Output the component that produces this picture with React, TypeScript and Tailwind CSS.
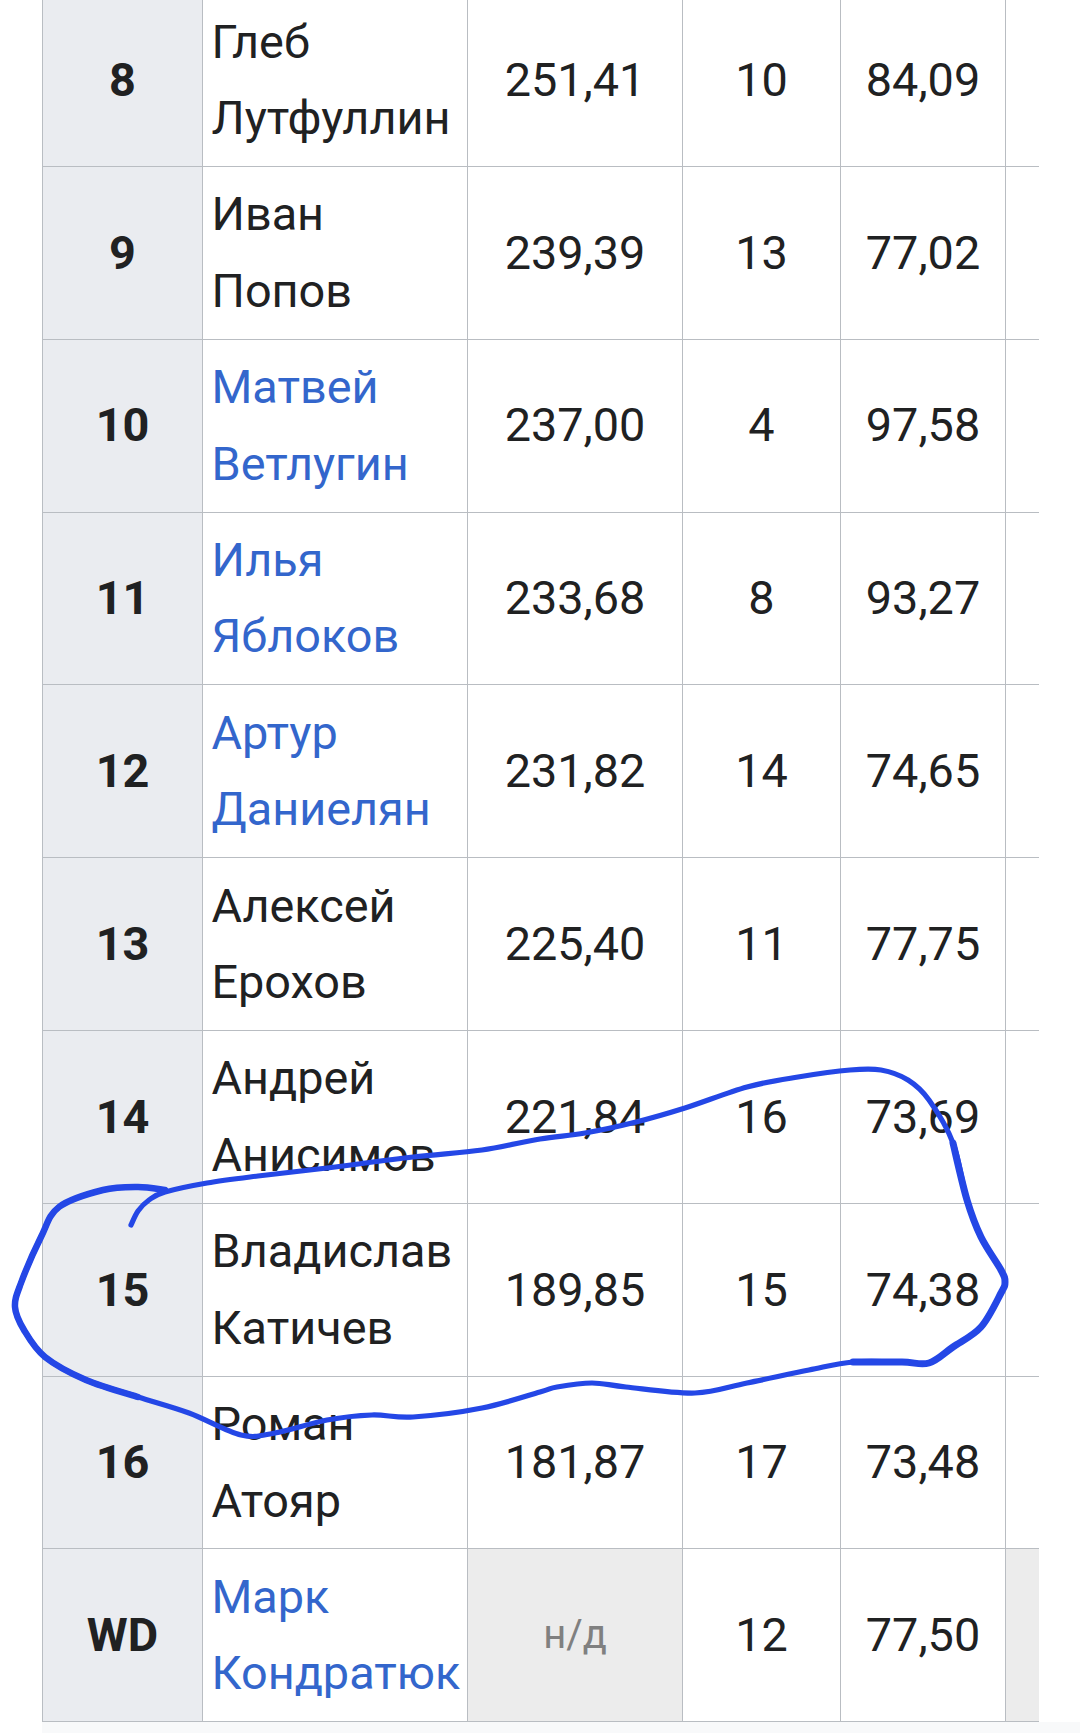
import React from 'react';

type Row = {
  rank: string;
  first: string;
  last: string;
  link?: boolean;
  total?: string;
  place: string;
  score: string;
};

const ROWS: Row[] = [
  { rank: '8', first: 'Глеб', last: 'Лутфуллин', total: '251,41', place: '10', score: '84,09' },
  { rank: '9', first: 'Иван', last: 'Попов', total: '239,39', place: '13', score: '77,02' },
  { rank: '10', first: 'Матвей', last: 'Ветлугин', link: true, total: '237,00', place: '4', score: '97,58' },
  { rank: '11', first: 'Илья', last: 'Яблоков', link: true, total: '233,68', place: '8', score: '93,27' },
  { rank: '12', first: 'Артур', last: 'Даниелян', link: true, total: '231,82', place: '14', score: '74,65' },
  { rank: '13', first: 'Алексей', last: 'Ерохов', total: '225,40', place: '11', score: '77,75' },
  { rank: '14', first: 'Андрей', last: 'Анисимов', total: '221,84', place: '16', score: '73,69' },
  { rank: '15', first: 'Владислав', last: 'Катичев', total: '189,85', place: '15', score: '74,38' },
  { rank: '16', first: 'Роман', last: 'Атояр', total: '181,87', place: '17', score: '73,48' },
  { rank: 'WD', first: 'Марк', last: 'Кондратюк', link: true, place: '12', score: '77,50' },
];

// hand-drawn marker loop, traced from the screenshot
const LOOP: [number, number][] = [
  [131, 1225], [138, 1211], [149, 1200], [165, 1192], [207, 1183], [258, 1176], [327, 1168],
  [413, 1157], [482, 1150], [540, 1139], [585, 1133], [636, 1122], [685, 1108], [747, 1087],
  [798, 1077], [850, 1070], [881, 1070], [908, 1080], [929, 1100], [953, 1143], [967, 1200],
  [981, 1237], [1001, 1270], [1005, 1282], [1001, 1293], [981, 1327], [953, 1347], [929, 1363],
  [902, 1362], [853, 1362], [809, 1370], [747, 1383], [695, 1393], [626, 1387], [592, 1383],
  [557, 1387], [540, 1392], [482, 1408], [413, 1417], [372, 1415], [327, 1420], [275, 1433],
  [241, 1435], [189, 1413], [138, 1397], [86, 1380], [45, 1357], [24, 1330], [15, 1307],
  [21, 1283], [41, 1237], [59, 1207], [103, 1190], [138, 1187], [165, 1190],
];

const smoothPath = (pts: [number, number][]) => {
  let d = `M${pts[0][0]},${pts[0][1]}`;
  for (let i = 0; i < pts.length - 1; i++) {
    const p0 = pts[i - 1] || pts[i];
    const p1 = pts[i];
    const p2 = pts[i + 1];
    const p3 = pts[i + 2] || p2;
    const c1x = p1[0] + (p2[0] - p0[0]) / 6;
    const c1y = p1[1] + (p2[1] - p0[1]) / 6;
    const c2x = p2[0] - (p3[0] - p1[0]) / 6;
    const c2y = p2[1] - (p3[1] - p1[1]) / 6;
    d += ` C${c1x.toFixed(1)},${c1y.toFixed(1)} ${c2x.toFixed(1)},${c2y.toFixed(1)} ${p2[0]},${p2[1]}`;
  }
  return d;
};

function ResultRow({ row }: { row: Row }) {
  const nameColor = row.link ? 'text-[#3366cc]' : 'text-[#202122]';
  return (
    <div className="grid grid-cols-[160px_265px_215px_158px_165px_122px] border-b border-[#b9bdc2]">
      <div className="flex items-center justify-center border-r border-[#b9bdc2] bg-[#eaecf0] font-bold">
        {row.rank}
      </div>
      <div className={`border-r border-[#b9bdc2] py-[9.5px] pl-[8.5px] pr-[9.5px] ${nameColor}`}>
        <div>{row.first}</div>
        <div className="whitespace-nowrap">{row.last}</div>
      </div>
      {row.total ? (
        <div className="flex items-center justify-center border-r border-[#b9bdc2]">{row.total}</div>
      ) : (
        <div className="flex items-center justify-center border-r border-[#b9bdc2] bg-[#ececec] text-[40px] text-[#808080]">
          н/д
        </div>
      )}
      <div className="flex items-center justify-center border-r border-[#b9bdc2]">{row.place}</div>
      <div className="flex items-center justify-center border-r border-[#b9bdc2]">{row.score}</div>
      <div className={row.total ? '' : 'bg-[#ececec]'} />
    </div>
  );
}

export default function App() {
  const loop = smoothPath(LOOP);
  return (
    <div
      className="relative h-[1733px] w-[1080px] overflow-hidden bg-white text-[46.8px] leading-[76.4px] text-[#202122]"
      style={{ fontFamily: 'Roboto, "Noto Sans", sans-serif' }}
    >
      <div className="-mt-[5.9px] ml-[42px] w-[997px] overflow-hidden border-l border-[#b9bdc2]">
        <div className="w-[1086px]">
          {ROWS.map((row) => (
            <ResultRow key={row.rank} row={row} />
          ))}
        </div>
      </div>
      <div className="ml-[42px] h-[12px] bg-[#f8f9fa]" />

      {/* marker annotation over the table */}
      <svg
        className="pointer-events-none absolute left-0 top-0"
        width={1080}
        height={1733}
        viewBox="0 0 1080 1733"
        fill="none"
      >
        <path d={loop} stroke="#2447e6" strokeWidth={5.2} strokeLinecap="round" strokeLinejoin="round" />
        <path
          d={smoothPath(LOOP.slice(19, 30))}
          stroke="#2447e6"
          strokeWidth={7}
          strokeLinecap="round"
          strokeLinejoin="round"
        />
        <path
          d={smoothPath(LOOP.slice(44, 55))}
          stroke="#2447e6"
          strokeWidth={6.5}
          strokeLinecap="round"
          strokeLinejoin="round"
        />
      </svg>
    </div>
  );
}
